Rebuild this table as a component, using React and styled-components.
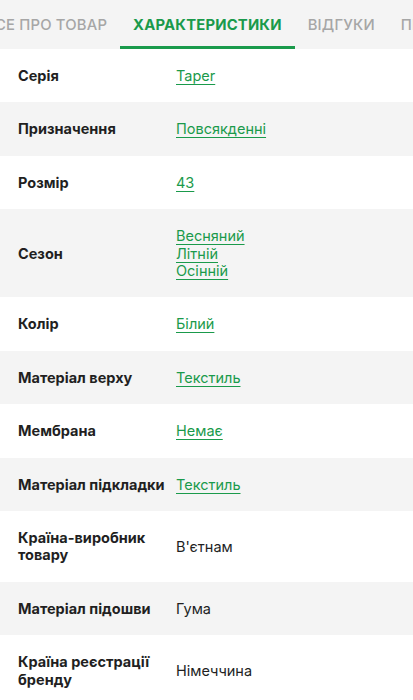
import React from "react";
import styled, { createGlobalStyle } from "styled-components";

const Global = createGlobalStyle`
  html, body { margin: 0; padding: 0; background: #fff; }
  body { font-family: Inter, "Noto Sans", "Liberation Sans", sans-serif; color: #221f1f; }
  * { box-sizing: border-box; }
`;

const Page = styled.div`
  width: 413px;
  height: 700px;
  overflow: hidden;
  background: #fff;
`;

const TabBar = styled.nav`
  height: 49px;
  background: #f4f4f4;
  overflow: hidden;
`;

const TabStrip = styled.div`
  display: flex;
  height: 100%;
  margin-left: ${(p) => p.$offset}px;
`;

const Tab = styled.div`
  flex: none;
  height: 100%;
  padding: 3px 13px 0;
  display: flex;
  align-items: center;
  font-size: 14.8px;
  text-transform: uppercase;
  letter-spacing: 0.2px;
  white-space: nowrap;
  font-weight: ${(p) => (p.$active ? 700 : 500)};
  color: ${(p) => (p.$active ? "#1a9a4b" : "#a6a6a6")};
  border-bottom: 3px solid ${(p) => (p.$active ? "#1a9a4b" : "transparent")};
`;

const Table = styled.div`
  display: flex;
  flex-direction: column;
`;

const Row = styled.div`
  display: grid;
  grid-template-columns: 158px 1fr;
  align-items: center;
  padding: 18px 18px;
  background: ${(p) => (p.$shaded ? "#f4f4f4" : "#fff")};
  font-size: 14.5px;
  line-height: 17.4px;
`;

const Label = styled.div`
  font-weight: 700;
  color: #221f1f;
  padding-right: 8px;
`;

const Values = styled.div`
  display: flex;
  flex-direction: column;
  align-items: flex-start;
`;

const Link = styled.a`
  color: #1a9a4b;
  text-decoration: underline;
  text-decoration-thickness: 1px;
  text-underline-offset: 3px;
  cursor: pointer;
`;

const Plain = styled.span`
  color: #221f1f;
`;

const rows = [
  { label: "Серія", values: ["Taper"], link: true },
  { label: "Призначення", values: ["Повсякденні"], link: true },
  { label: "Розмір", values: ["43"], link: true },
  { label: "Сезон", values: ["Весняний", "Літній", "Осінній"], link: true },
  { label: "Колір", values: ["Білий"], link: true },
  { label: "Матеріал верху", values: ["Текстиль"], link: true },
  { label: "Мембрана", values: ["Немає"], link: true },
  { label: "Матеріал підкладки", values: ["Текстиль"], link: true },
  { label: "Країна-виробник товару", values: ["В'єтнам"], link: false },
  { label: "Матеріал підошви", values: ["Гума"], link: false },
  { label: "Країна реєстрації бренду", values: ["Німеччина"], link: false },
];

export default function App() {
  return (
    <Page>
      <Global />
      <TabBar>
        <TabStrip $offset={-28}>
          <Tab>Все про товар</Tab>
          <Tab $active>Характеристики</Tab>
          <Tab>Відгуки</Tab>
          <Tab>Питання</Tab>
        </TabStrip>
      </TabBar>
      <Table>
        {rows.map((r, i) => (
          <Row key={r.label} $shaded={i % 2 === 1}>
            <Label>{r.label}</Label>
            <Values>
              {r.values.map((v) =>
                r.link ? <Link key={v}>{v}</Link> : <Plain key={v}>{v}</Plain>
              )}
            </Values>
          </Row>
        ))}
      </Table>
    </Page>
  );
}
